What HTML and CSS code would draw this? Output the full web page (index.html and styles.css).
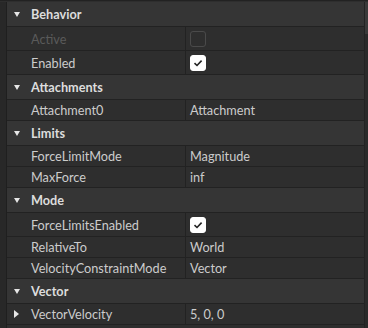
FILE: index.html
```html
<!DOCTYPE html>
<html>
<head>
    <title>Properties</title>
    <link rel="stylesheet" href="styles.css">
</head>
<body>
    <div class="panel">
        <div class="gutter"></div>
        <div class="list">
            <div class="section">
                <span class="arrow down"></span>Behavior
            </div>
            <div class="prop tall">
                <div class="name disabled">Active</div>
                <div class="value"><span class="check"></span></div>
            </div>
            <div class="prop tall">
                <div class="name">Enabled</div>
                <div class="value"><span class="check on">
                    <svg width="10" height="8" viewBox="0 0 10 8"><path d="M1.5 4.2 L4 6.5 L8.6 1.6" fill="none" stroke="#222" stroke-width="1.6"/></svg>
                </span></div>
            </div>

            <div class="section">
                <span class="arrow down"></span>Attachments
            </div>
            <div class="prop">
                <div class="name">Attachment0</div>
                <div class="value">Attachment</div>
            </div>

            <div class="section">
                <span class="arrow down"></span>Limits
            </div>
            <div class="prop">
                <div class="name">ForceLimitMode</div>
                <div class="value">Magnitude</div>
            </div>
            <div class="prop">
                <div class="name">MaxForce</div>
                <div class="value">inf</div>
            </div>

            <div class="section">
                <span class="arrow down"></span>Mode
            </div>
            <div class="prop tall">
                <div class="name">ForceLimitsEnabled</div>
                <div class="value"><span class="check on">
                    <svg width="10" height="8" viewBox="0 0 10 8"><path d="M1.5 4.2 L4 6.5 L8.6 1.6" fill="none" stroke="#222" stroke-width="1.6"/></svg>
                </span></div>
            </div>
            <div class="prop">
                <div class="name">RelativeTo</div>
                <div class="value">World</div>
            </div>
            <div class="prop">
                <div class="name">VelocityConstraintMode</div>
                <div class="value">Vector</div>
            </div>

            <div class="section">
                <span class="arrow down"></span>Vector
            </div>
            <div class="prop">
                <div class="name"><span class="arrow right"></span>VectorVelocity</div>
                <div class="value">5, 0, 0</div>
            </div>
        </div>
        <div class="scroll"><div class="thumb"></div></div>
    </div>
</body>
</html>
```

FILE: styles.css
```css
body {
    margin: 0;
    background: #2e2e2e;
    font-family: Lato, "Open Sans", sans-serif;
    font-size: 12.7px;
    color: #cccccc;
}

.panel {
    display: flex;
    height: 328px;
    border-top: 1px solid #222222;
    padding-top: 1px;
    box-sizing: border-box;
    background: #2e2e2e;
}

.gutter {
    width: 6px;
    background: #282828;
    border-right: 1px solid #1f1f1f;
}

.list {
    flex: 1;
    display: flex;
    flex-direction: column;
}

.section {
    height: 24px;
    display: flex;
    align-items: center;
    padding-left: 24px;
    background: #353535;
    border-bottom: 1px solid #222222;
    font-weight: bold;
    color: #dddddd;
    position: relative;
}

.prop {
    height: 20px;
    display: flex;
    border-bottom: 1px solid #222222;
}

.prop.tall {
    height: 23px;
}

.name {
    width: 154px;
    padding-left: 24px;
    display: flex;
    align-items: center;
    border-right: 1px solid #222222;
    position: relative;
}

.name.disabled {
    color: #5a5a5a;
}

.value {
    flex: 1;
    padding-left: 4px;
    display: flex;
    align-items: center;
}

.arrow {
    position: absolute;
    width: 0;
    height: 0;
}

.arrow.down {
    left: 7px;
    top: 10px;
    border-left: 3.5px solid transparent;
    border-right: 3.5px solid transparent;
    border-top: 5px solid #e6e6e6;
}

.arrow.right {
    left: 7px;
    top: 6px;
    border-top: 4px solid transparent;
    border-bottom: 4px solid transparent;
    border-left: 5px solid #e6e6e6;
}

.check {
    width: 14px;
    height: 14px;
    border: 1px solid #4a4a4a;
    border-radius: 3px;
    display: flex;
    align-items: center;
    justify-content: center;
}

.check.on {
    background: #ffffff;
    border-color: #ffffff;
}

.scroll {
    width: 3px;
    border-left: 1px solid #232323;
    background: #2a2a2a;
}

.thumb {
    height: 32px;
    background: #3a3a3a;
}
```
